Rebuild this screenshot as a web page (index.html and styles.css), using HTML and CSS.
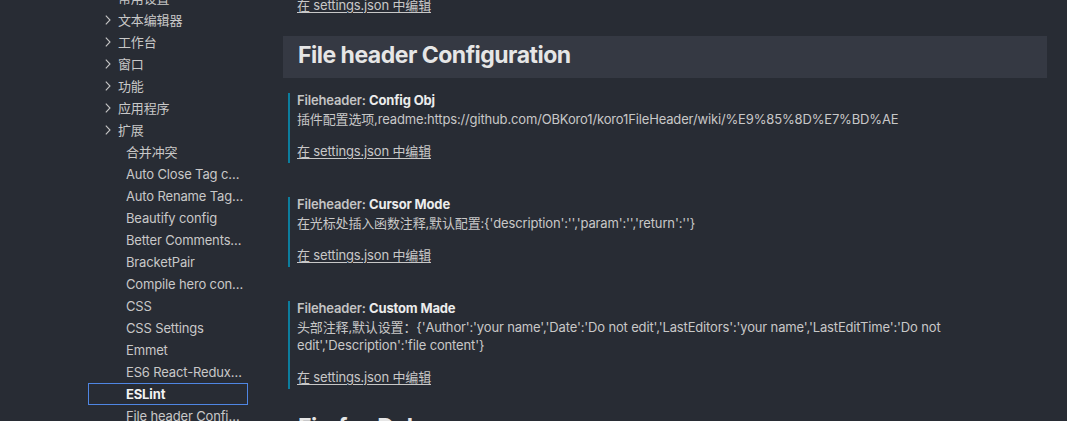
FILE: index.html
```html
<!DOCTYPE html>
<html lang="zh-CN">
<head>
<meta charset="utf-8">
<title>Settings</title>
<link rel="stylesheet" href="styles.css">
</head>
<body>
<div class="layout">
  <nav class="sidebar">
    <div class="tree">
      <div class="row leaf-sub"><span class="label">常用设置</span></div>
      <div class="row group"><svg class="chev" viewBox="0 0 6 10" width="6" height="10"><path d="M0.8 0.6 L5 5 L0.8 9.4"/></svg><span class="label">文本编辑器</span></div>
      <div class="row group"><svg class="chev" viewBox="0 0 6 10" width="6" height="10"><path d="M0.8 0.6 L5 5 L0.8 9.4"/></svg><span class="label">工作台</span></div>
      <div class="row group"><svg class="chev" viewBox="0 0 6 10" width="6" height="10"><path d="M0.8 0.6 L5 5 L0.8 9.4"/></svg><span class="label">窗口</span></div>
      <div class="row group"><svg class="chev" viewBox="0 0 6 10" width="6" height="10"><path d="M0.8 0.6 L5 5 L0.8 9.4"/></svg><span class="label">功能</span></div>
      <div class="row group"><svg class="chev" viewBox="0 0 6 10" width="6" height="10"><path d="M0.8 0.6 L5 5 L0.8 9.4"/></svg><span class="label">应用程序</span></div>
      <div class="row group"><svg class="chev" viewBox="0 0 6 10" width="6" height="10"><path d="M0.8 0.6 L5 5 L0.8 9.4"/></svg><span class="label">扩展</span></div>
      <div class="row leaf"><span class="label">合并冲突</span></div>
      <div class="row leaf"><span class="label">Auto Close Tag configuration</span></div>
      <div class="row leaf"><span class="label">Auto Rename Tag configuration</span></div>
      <div class="row leaf"><span class="label">Beautify config</span></div>
      <div class="row leaf"><span class="label">Better Comments configuration</span></div>
      <div class="row leaf"><span class="label">BracketPair</span></div>
      <div class="row leaf"><span class="label">Compile hero configuration</span></div>
      <div class="row leaf"><span class="label">CSS</span></div>
      <div class="row leaf"><span class="label">CSS Settings</span></div>
      <div class="row leaf"><span class="label">Emmet</span></div>
      <div class="row leaf"><span class="label">ES6 React-Redux snippets</span></div>
      <div class="row leaf selected"><span class="label">ESLint</span></div>
      <div class="row leaf"><span class="label">File header Configuration</span></div>
    </div>
  </nav>
  <main class="content">
    <div class="setting plain">
      <a class="edit-link" href="#">在 settings.json 中编辑</a>
    </div>

    <h2 class="group-title focused">File header Configuration</h2>

    <div class="setting modified">
      <div class="title"><span class="category">Fileheader: </span><span class="key">Config Obj</span></div>
      <div class="desc">插件配置选项,readme:https://github.com/OBKoro1/koro1FileHeader/wiki/%E9%85%8D%E7%BD%AE</div>
      <a class="edit-link" href="#">在 settings.json 中编辑</a>
    </div>

    <div class="setting modified">
      <div class="title"><span class="category">Fileheader: </span><span class="key">Cursor Mode</span></div>
      <div class="desc">在光标处插入函数注释,默认配置:{'description':'','param':'','return':''}</div>
      <a class="edit-link" href="#">在 settings.json 中编辑</a>
    </div>

    <div class="setting modified">
      <div class="title"><span class="category">Fileheader: </span><span class="key">Custom Made</span></div>
      <div class="desc">头部注释,默认设置：{'Author':'your name','Date':'Do not edit','LastEditors':'your name','LastEditTime':'Do not edit','Description':'file content'}</div>
      <a class="edit-link" href="#">在 settings.json 中编辑</a>
    </div>

    <h2 class="group-title">Firefox Debug</h2>
  </main>
</div>
</body>
</html>
```

FILE: styles.css
```css
html, body {
  margin: 0;
  padding: 0;
  height: 100%;
  overflow: hidden;
  background: #282c34;
}

body {
  font-family: Inter, "Noto Sans CJK SC", "Noto Sans", sans-serif;
  font-size: 13px;
  letter-spacing: -0.15px;
  color: #c8c8c8;
}

.layout {
  display: flex;
  height: 421px;
  overflow: hidden;
}

/* ---------- sidebar ---------- */
.sidebar {
  width: 270px;
  flex: 0 0 270px;
  overflow: hidden;
}

.tree {
  display: flex;
  flex-direction: column;
  margin-top: -13px;
  padding-left: 88px;
}

.row {
  box-sizing: border-box;
  width: 160px;
  height: 22px;
  line-height: 20px;
  border: 1px solid transparent;
  display: flex;
  align-items: center;
  white-space: nowrap;
  color: #c8c8c8;
}

.row .label {
  overflow: hidden;
  text-overflow: ellipsis;
  min-width: 0;
  padding-right: 2px;
}

.row.group {
  padding-left: 16px;
}

.row.leaf-sub {
  padding-left: 29px;
}

.row.leaf {
  padding-left: 37px;
}

.chev {
  flex: 0 0 6px;
  margin-right: 7px;
  fill: none;
  stroke: #c5c5c5;
  stroke-width: 1.1;
}

.row.selected {
  border-color: #4f86e3;
  color: #f2f2f2;
  font-weight: 700;
}

/* ---------- content ---------- */
.content {
  flex: 1;
  min-width: 0;
  padding: 0 20px 0 13px;
  margin-top: -4px;
}

.setting {
  margin-left: 5px;
  border-left: 2px solid transparent;
  padding: 0 0 3px 7px;
  margin-bottom: 19px;
  max-width: 660px;
}

.setting + .setting {
  margin-top: 34px;
}

.setting.modified {
  border-left-color: #0c7d9d;
}

.title {
  line-height: 14px;
  font-weight: 600;
  white-space: nowrap;
}

.category {
  color: #c4c4c4;
}

.key {
  color: #ececec;
  font-weight: 700;
}

.desc {
  margin-top: 3px;
  line-height: 18px;
  color: #c8c8c8;
}

.edit-link {
  display: block;
  width: max-content;
  margin-top: 14px;
  line-height: 18px;
  color: #c8c8c8;
  text-decoration: underline;
  text-underline-offset: 2px;
}

.setting.plain .edit-link {
  margin-top: 0;
}

.group-title {
  margin: 0 0 15px 0;
  padding: 0 0 4px 15px;
  line-height: 38px;
  font-size: 23px;
  font-weight: 700;
  letter-spacing: -0.5px;
  color: #e6e6e6;
}

.group-title.focused {
  background: #353943;
}
```
